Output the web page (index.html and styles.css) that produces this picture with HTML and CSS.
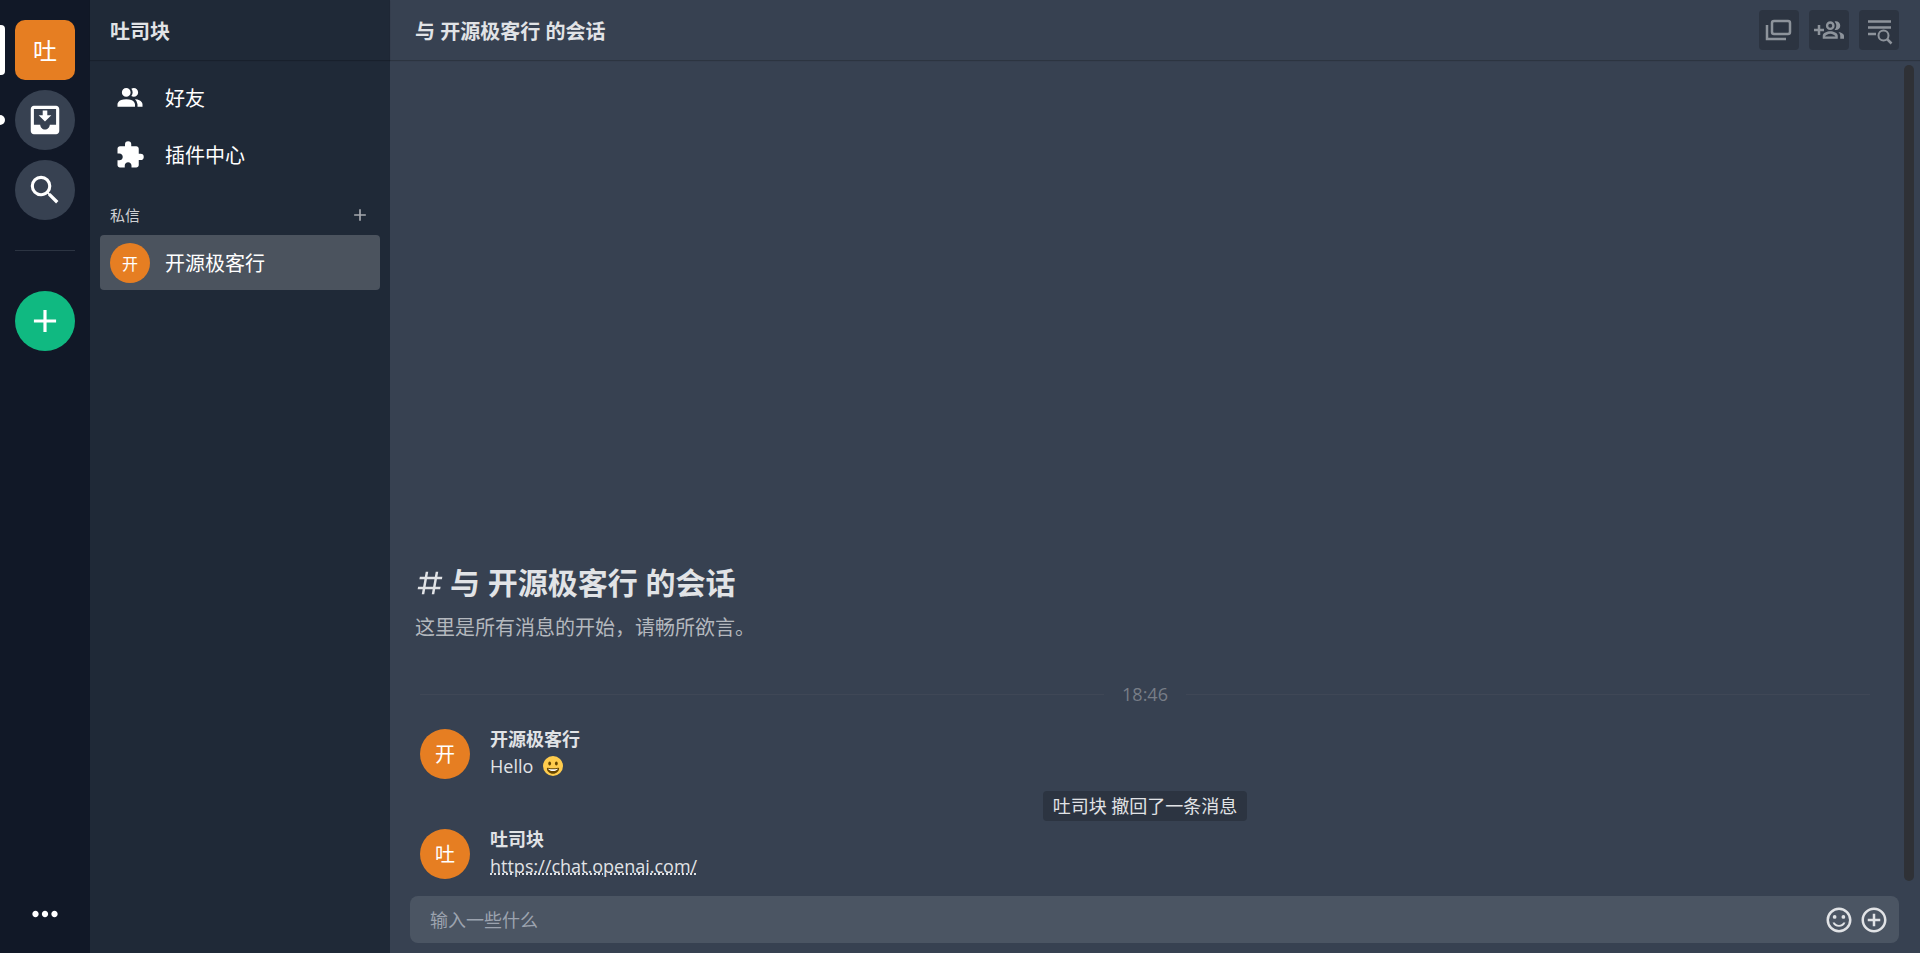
FILE: index.html
```html
<!DOCTYPE html>
<html lang="zh-CN">
<head>
    <meta charset="UTF-8">
    <title>吐司块</title>
    <link rel="stylesheet" href="styles.css">
</head>
<body>
<div class="app">
    <nav class="navbar">
        <button class="nav-item nav-user active">吐</button>
        <button class="nav-item unread" aria-label="收件箱">
            <svg class="icon-lg" viewBox="0 0 24 24"><path d="M16 9h-2.550V6h-2.900v3H8l4 4zm3-6H4.990C3.880 3 3.010 3.890 3.010 5L3 19c0 1.100.880 2 1.990 2H19c1.100 0 2-.9 2-2V5c0-1.110-.9-2-2-2zm0 12h-4c0 1.660-1.350 3-3 3s-3-1.340-3-3H4.990V5H19v10z"/></svg>
        </button>
        <button class="nav-item" aria-label="搜索">
            <svg class="icon-lg" viewBox="0 0 24 24"><path d="M15.500 14h-.79l-.28-.27A6.471 6.471 0 0 0 16 9.500 6.500 6.500 0 1 0 9.500 16c1.610 0 3.090-.59 4.230-1.570l.27.28v.79l5 4.990L20.490 19zm-6 0C7.010 14 5 11.990 5 9.500S7.010 5 9.500 5 14 7.010 14 9.500 11.990 14 9.500 14z"/></svg>
        </button>
        <hr class="nav-line">
        <button class="nav-item nav-add" aria-label="添加">
            <svg class="icon-lg" viewBox="0 0 24 24"><path d="M19 13h-6v6h-2v-6H5v-2h6V5h2v6h6z"/></svg>
        </button>
        <button class="nav-more" aria-label="更多">
            <svg class="icon-lg" viewBox="0 0 24 24"><path d="M6 10c-1.100 0-2 .9-2 2s.9 2 2 2 2-.9 2-2-.9-2-2-2zm12 0c-1.100 0-2 .9-2 2s.9 2 2 2 2-.9 2-2-.9-2-2-2zm-6 0c-1.100 0-2 .9-2 2s.9 2 2 2 2-.9 2-2-.9-2-2-2z"/></svg>
        </button>
    </nav>

    <aside class="sidebar">
        <header class="header">
            <h2 class="title">吐司块</h2>
        </header>
        <div class="side-list">
            <a class="side-item" href="#friends">
                <span class="side-icon">
                    <svg class="icon" viewBox="0 0 24 24"><path d="M16 17v2H2v-2s0-4 7-4 7 4 7 4m-3.500-9.500A3.500 3.500 0 1 0 9 11a3.500 3.500 0 0 0 3.500-3.500m3.440 5.500A5.320 5.320 0 0 1 18 17v2h4v-2s0-3.630-6.060-4M15 4a3.390 3.390 0 0 0-1.930.59 5 5 0 0 1 0 5.820A3.390 3.390 0 0 0 15 11a3.500 3.500 0 0 0 0-7z"/></svg>
                </span>
                好友
            </a>
            <a class="side-item" href="#plugins">
                <span class="side-icon">
                    <svg class="icon" viewBox="0 0 24 24"><path d="M20.500 11H19V7c0-1.100-.9-2-2-2h-4V3.500a2.500 2.500 0 0 0-5 0V5H4c-1.100 0-1.990.9-1.990 2v3.800H3.500c1.490 0 2.700 1.210 2.700 2.700s-1.210 2.700-2.700 2.700H2V20c0 1.100.9 2 2 2h3.800v-1.500c0-1.490 1.210-2.700 2.700-2.700s2.700 1.210 2.700 2.700V22H17c1.100 0 2-.9 2-2v-4h1.500a2.500 2.500 0 0 0 0-5z"/></svg>
                </span>
                插件中心
            </a>
            <div class="side-group">
                私信
                <button class="side-add" aria-label="新建私信">
                    <svg class="icon-sm" viewBox="0 0 24 24"><path d="M19 13h-6v6h-2v-6H5v-2h6V5h2v6h6z"/></svg>
                </button>
            </div>
            <a class="side-item selected" href="#converse">
                <span class="side-icon avatar avatar-sm">开</span>
                开源极客行
            </a>
        </div>
    </aside>

    <main class="chat">
        <header class="header">
            <h1 class="title">与 开源极客行 的会话</h1>
            <div class="actions">
                <button class="action" aria-label="独立窗口">
                    <svg class="icon" viewBox="0 0 30 30"><path d="M3 10v14h19M10 6h14a2 2 0 0 1 2 2v9a2 2 0 0 1-2 2H10a2 2 0 0 1-2-2V8a2 2 0 0 1 2-2z" fill="none" stroke="currentColor" stroke-width="2.500"/></svg>
                </button>
                <button class="action" aria-label="邀请成员">
                    <svg class="icon" viewBox="0 0 24 24"><path d="M5 8H3v3H0v2h3v3h2v-3h3v-2H5zm8 4a3.500 3.500 0 1 0 0-7 3.500 3.500 0 0 0 0 7zm0-5.100a1.600 1.600 0 1 1 0 3.200 1.600 1.600 0 0 1 0-3.200zm0 6.100c-2.500 0-6 1.200-6 3.600V19h12v-2.400c0-2.400-3.500-3.600-6-3.600zm-4.200 4.200c.4-1 2.400-2.200 4.200-2.200s3.800 1.200 4.200 2.200zM17.500 12a3.500 3.500 0 0 0 0-7c-.4 0-.7 0-1 .1a5.500 5.500 0 0 1 0 6.800c.3.1.6.1 1 .1zm2 1.500c.9.8 1.500 1.800 1.500 3.100V19h3v-2.400c0-1.600-1.900-2.700-4.500-3.100z"/></svg>
                </button>
                <button class="action" aria-label="搜索消息">
                    <svg class="icon" viewBox="0 0 30 30"><path d="M4 6.500h23M4 12.500h23M4 19h8" fill="none" stroke="currentColor" stroke-width="2.500"/><circle class="lens" cx="19.500" cy="20.500" r="5"/><path d="M23 24l4.500 4.500" stroke="currentColor" stroke-width="2.500"/></svg>
                </button>
            </div>
        </header>

        <div class="messages">
            <div class="intro">
                <h2 class="intro-title">
                    <svg class="icon" viewBox="0 0 24 24"><path d="M5.410 21l.71-4h-4l.35-2h4l1.060-6h-4l.35-2h4l.71-4h2l-.71 4h6l.71-4h2l-.71 4h4l-.35 2h-4l-1.060 6h4l-.35 2h-4l-.71 4h-2l.71-4h-6l-.71 4zM9.530 9l-1.060 6h6l1.060-6z"/></svg>
                    与 开源极客行 的会话
                </h2>
                <p class="intro-text">这里是所有消息的开始，请畅所欲言。</p>
            </div>
            <div class="divider">18:46</div>
            <div class="message">
                <div class="avatar">开</div>
                <div>
                    <div class="author">开源极客行</div>
                    <div class="content">Hello
                        <svg class="emoji" viewBox="0 0 36 36"><circle cx="18" cy="18" r="18" fill="#ffcc4d"/><ellipse cx="12" cy="13.500" rx="2.500" ry="3.500" fill="#664500"/><ellipse cx="24" cy="13.500" rx="2.500" ry="3.500" fill="#664500"/><path fill="#664500" d="M18 22c-3.600 0-6-.4-9-1-.7-.1-2 0-2 2 0 4 4.600 9 11 9s11-5 11-9c0-2-1.300-2.100-2-2-3 .6-5.400 1-9 1z"/><path fill="#fff" d="M9 23s3 1 9 1 9-1 9-1-2 4-9 4-9-4-9-4z"/></svg>
                    </div>
                </div>
            </div>
            <div class="notice">吐司块 撤回了一条消息</div>
            <div class="message">
                <div class="avatar">吐</div>
                <div>
                    <div class="author">吐司块</div>
                    <div class="content"><a href="https://chat.openai.com/">https://chat.openai.com/</a></div>
                </div>
            </div>
            <div class="scrollbar"></div>
        </div>

        <form class="input-box">
            <input type="text" placeholder="输入一些什么" aria-label="输入一些什么">
            <button type="button" aria-label="表情">
                <svg class="icon" viewBox="0 0 24 24"><circle cx="15.500" cy="9.500" r="1.500"/><circle cx="8.500" cy="9.500" r="1.500"/><path d="M12 16c-1.480 0-2.750-.81-3.450-2H6.880a5.495 5.495 0 0 0 10.240 0h-1.670c-.7 1.190-1.970 2-3.450 2zm-.010-14C6.470 2 2 6.480 2 12s4.470 10 9.990 10C17.520 22 22 17.520 22 12S17.520 2 11.990 2zM12 20a8 8 0 1 1 0-16 8 8 0 0 1 0 16z"/></svg>
            </button>
            <button type="button" aria-label="更多操作">
                <svg class="icon" viewBox="0 0 24 24"><path d="M13 7h-2v4H7v2h4v4h2v-4h4v-2h-4zm-1-5C6.480 2 2 6.480 2 12s4.480 10 10 10 10-4.480 10-10S17.520 2 12 2zm0 18c-4.410 0-8-3.590-8-8s3.590-8 8-8 8 3.590 8 8-3.590 8-8 8z"/></svg>
            </button>
        </form>
    </main>
</div>
</body>
</html>
```

FILE: styles.css
```css
* {
    margin: 0;
    padding: 0;
    box-sizing: border-box;
}

body {
    font-family: "Open Sans", "Noto Sans CJK SC", sans-serif;
    font-size: 20px;
    line-height: 30px;
    color: #e1e3e6;
    background: #374151;
}

button {
    display: flex;
    align-items: center;
    justify-content: center;
    border: none;
    background: none;
    font: inherit;
    color: inherit;
    cursor: pointer;
}

a {
    color: inherit;
    text-decoration: none;
}

svg {
    display: block;
    flex: none;
    fill: currentColor;
}

.icon {
    width: 30px;
    height: 30px;
}

.icon-sm {
    width: 20px;
    height: 20px;
}

.icon-lg {
    width: 38px;
    height: 38px;
}

.app {
    display: flex;
    height: 100vh;
}

/* 左侧导航 */
.navbar {
    display: flex;
    flex-direction: column;
    align-items: center;
    gap: 10px;
    width: 90px;
    padding: 20px 0;
    background: #111827;
    color: #fff;
}

.nav-item {
    position: relative;
    width: 60px;
    height: 60px;
    border-radius: 50%;
    background: #374151;
}

.nav-user {
    border-radius: 10px;
    background: #e67e22;
    font-family: "Noto Sans CJK SC", sans-serif;
    font-size: 24px;
}

.nav-item.active::before,
.nav-item.unread::before {
    content: "";
    position: absolute;
    left: -15px;
    width: 5px;
    height: 50px;
    border-radius: 0 4px 4px 0;
    background: #fff;
}

.nav-item.unread::before {
    height: 10px;
    border-radius: 0 5px 5px 0;
}

.nav-line {
    width: 60px;
    margin: 20px 0 30px;
    border: none;
    border-top: 1px solid #2c3442;
}

.nav-add {
    background: #10b981;
}

.nav-more {
    margin-top: auto;
}

/* 会话列表 */
.sidebar {
    width: 300px;
    background: #1f2937;
}

.header {
    display: flex;
    align-items: center;
    justify-content: space-between;
    height: 60px;
    padding: 0 20px;
    box-shadow: 0 1px 1px rgba(0, 0, 0, 0.2);
}

.title {
    padding-top: 4px;
    font-size: 20px;
}

.side-list {
    padding: 10px;
    font-family: "Noto Sans CJK SC", sans-serif;
}

.side-item {
    display: flex;
    align-items: center;
    gap: 15px;
    height: 55px;
    margin-bottom: 2px;
    padding: 0 10px;
    border-radius: 4px;
    color: #fff;
}

.side-item.selected {
    background: #4b535e;
}

.side-icon {
    display: flex;
    justify-content: center;
    width: 40px;
}

.side-group {
    display: flex;
    align-items: center;
    justify-content: space-between;
    padding: 16px 10px 5px;
    font-size: 15px;
    color: #cfd1d4;
}

.side-add {
    color: #a6a9af;
}

.avatar {
    display: flex;
    align-items: center;
    justify-content: center;
    flex: none;
    width: 50px;
    height: 50px;
    border-radius: 50%;
    background: #e67e22;
    font-family: "Noto Sans CJK SC", sans-serif;
    color: #fff;
}

.avatar-sm {
    width: 40px;
    height: 40px;
    font-size: 16px;
}

/* 聊天区 */
.chat {
    display: flex;
    flex-direction: column;
    flex: 1;
    min-width: 0;
}

.chat .header {
    padding: 0 21px 0 25px;
}

.actions {
    display: flex;
    gap: 10px;
}

.action {
    width: 40px;
    height: 40px;
    border-radius: 4px;
    background: #2c3441;
    color: #8d939b;
}

.lens {
    fill: #2c3441;
    stroke: currentColor;
    stroke-width: 2;
}

.messages {
    position: relative;
    display: flex;
    flex: 1;
    flex-direction: column;
    justify-content: flex-end;
    padding: 0 20px 8px 0;
}

.scrollbar {
    position: absolute;
    top: 5px;
    right: 6px;
    bottom: 15px;
    width: 10px;
    border-radius: 5px;
    background: #2f3136;
}

.intro {
    padding: 0 25px;
}

.intro-title {
    display: flex;
    align-items: center;
    gap: 5px;
    font-size: 30px;
    line-height: 40px;
}

.intro-text {
    margin: 10px 0 36px;
    color: #b4b8be;
}

.divider {
    display: flex;
    align-items: center;
    gap: 18px;
    margin: 0 30px 15px;
    font-size: 18px;
    color: #777d87;
}

.divider::before,
.divider::after {
    content: "";
    flex: 1;
    border-top: 1px solid #3f4756;
}

.message {
    display: flex;
    gap: 20px;
    padding: 5px 30px;
}

.author,
.content {
    font-size: 18px;
    line-height: 20px;
}

.author {
    font-weight: bold;
}

.content {
    display: flex;
    align-items: center;
    gap: 10px;
    line-height: 34px;
}

.content a {
    text-decoration: underline dotted;
}

.emoji {
    width: 20px;
    height: 20px;
}

.notice {
    align-self: center;
    margin: 3px 0;
    padding: 0 10px;
    border-radius: 4px;
    background: #2c3441;
    font-size: 18px;
}

.input-box {
    display: flex;
    align-items: center;
    gap: 5px;
    height: 47px;
    margin: 0 21px 10px 20px;
    padding: 0 10px 0 20px;
    border-radius: 8px;
    background: #4b5563;
}

.input-box input {
    flex: 1;
    min-width: 0;
    border: none;
    outline: none;
    background: none;
    font: inherit;
    font-size: 18px;
    color: inherit;
}

.input-box input::placeholder {
    color: #9ca3af;
}
```
